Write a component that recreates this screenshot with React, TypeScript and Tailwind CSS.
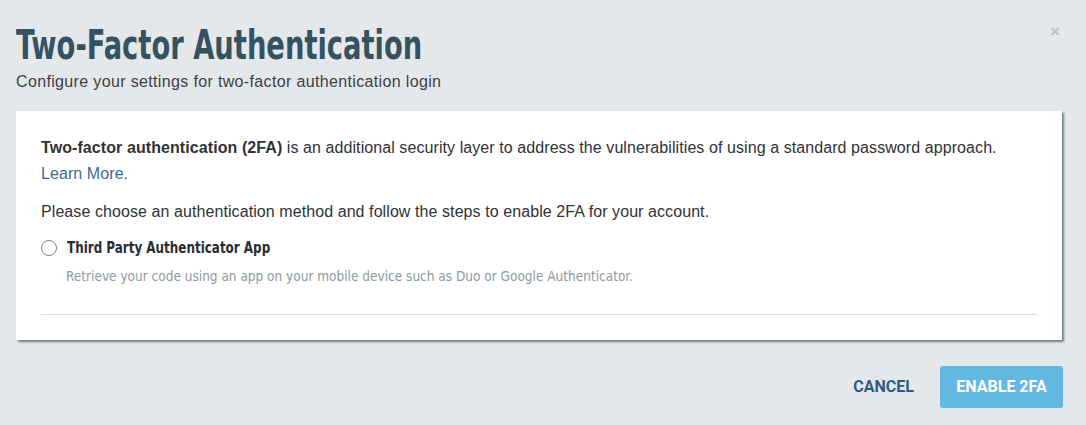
import React from "react";

export default function App() {
  return (
    <div className="flex h-[425px] w-full flex-col bg-[#e5e8eb] px-4 font-['Liberation_Sans',sans-serif]">
      <div className="relative pt-[21px]">
        <h1 className="origin-left scale-x-[0.76] text-[40px] leading-[48px] font-bold whitespace-nowrap text-[#34525f] font-['DejaVu_Sans_Condensed',sans-serif]">
          Two-Factor Authentication
        </h1>
        <p className="mt-[3px] text-[16px] leading-5 tracking-[0.35px] text-[#3c3f44]">
          Configure your settings for two-factor authentication login
        </p>
        <button className="absolute top-[24px] right-[10px] text-[17px] leading-4 font-bold text-[#bcc0c4]">
          ×
        </button>
      </div>

      <div className="mt-[19px] w-[1046px] bg-white px-[25px] pt-[24px] pb-[25px] shadow-[2px_2px_2px_#6d828d]">
        <p className="text-[16px] leading-[26px] tracking-[0.08px] text-[#2f3236]">
          <span className="font-bold">Two-factor authentication (2FA)</span> is an additional
          security layer to address the vulnerabilities of using a standard password approach.
          <br />
          <a className="text-[#3a6b96]">Learn More.</a>
        </p>
        <p className="mt-[12px] text-[16px] leading-[26px] tracking-[0.08px] text-[#2f3236]">
          Please choose an authentication method and follow the steps to enable 2FA for your
          account.
        </p>
        <label className="mt-[11px] flex items-center gap-[10px]">
          <span className="h-4 w-4 rounded-full border border-[#7b7f84] bg-white" />
          <span className="origin-left scale-x-[0.83] text-[16px] leading-6 font-bold whitespace-nowrap text-[#2a2d31] font-['DejaVu_Sans_Condensed',sans-serif]">
            Third Party Authenticator App
          </span>
        </label>
        <p className="mt-[6px] pl-[25px] text-[13.5px] leading-5 text-[#8d9aa3] font-['DejaVu_Sans_Condensed',sans-serif]">
          Retrieve your code using an app on your mobile device such as Duo or Google Authenticator.
        </p>
        <div className="mt-[28px] border-t border-[#dcdcdc]" />
      </div>

      <div className="mt-[26px] flex w-[1047px] items-center justify-end gap-[26px]">
        <button className="text-[16px] font-bold text-[#2c5b86] font-['Roboto',sans-serif]">
          CANCEL
        </button>
        <button className="h-[42px] w-[123px] rounded-[3px] bg-[#62b8e0] text-[16px] font-bold text-white font-['Roboto',sans-serif]">
          ENABLE 2FA
        </button>
      </div>
    </div>
  );
}
